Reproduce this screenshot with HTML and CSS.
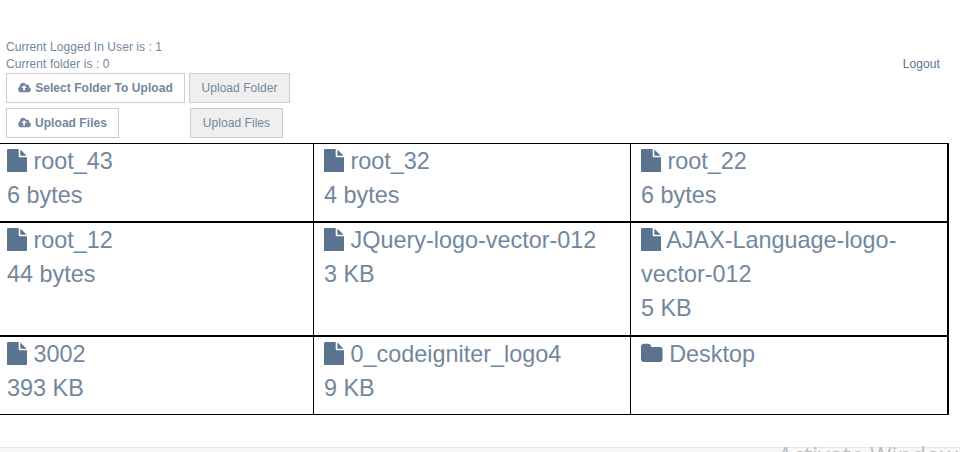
FILE: index.html
```html
<!DOCTYPE html>
<html lang="en">
<head>
<meta charset="utf-8">
<title>Files</title>
<link rel="stylesheet" href="styles.css">
</head>
<body>
<svg class="defs" aria-hidden="true">
<symbol id="file" viewBox="0 0 1536 1792"><path d="M1024 512v-472q22 14 36 28l408 408q14 14 28 36h-472zM896 544q0 40 28 68t68 28h544v1056q0 40-28 68t-68 28h-1344q-40 0-68-28t-28-68v-1600q0-40 28-68t68-28h800v544z"/></symbol>
<symbol id="folder" viewBox="0 0 1664 1792"><path d="M1664 608v704q0 92-66 158t-158 66h-1216q-92 0-158-66t-66-158v-960q0-92 66-158t158-66h320q92 0 158 66t66 158v32h672q92 0 158 66t66 158z"/></symbol>
<symbol id="cloud" viewBox="0 0 1920 1792"><path d="M1280 864q0-14-9-23l-352-352q-9-9-23-9t-23 9l-351 351q-10 12-10 24 0 14 9 23t23 9h224v352q0 13 9.5 22.5t22.5 9.5h192q13 0 22.5-9.5t9.5-22.5v-352h224q13 0 22.5-9.5t9.5-22.5zM1920 1152q0 159-112.5 271.5t-271.5 112.5h-1088q-185 0-316.5-131.5t-131.5-316.5q0-130 70-240t188-165q-2-30-2-43 0-212 150-362t362-150q156 0 285.5 87t188.5 231q71-62 166-62 106 0 181 75t75 181q0 76-41 138 130 31 213.5 135.5t83.5 238.5z"/></symbol>
</svg>
<header class="top">
  <div class="status">
    <div>Current Logged In User is : 1</div>
    <div>Current folder is : 0</div>
  </div>
  <a class="logout">Logout</a>
</header>
<div class="actions">
  <div class="slot"><label class="btn pick pick-folder"><svg class="cloud"><use href="#cloud"/></svg>Select Folder To Upload</label></div>
  <button class="btn send send-folder">Upload Folder</button>
</div>
<div class="actions">
  <div class="slot"><label class="btn pick pick-files"><svg class="cloud"><use href="#cloud"/></svg>Upload Files</label></div>
  <button class="btn send send-files">Upload Files</button>
</div>
<main class="grid">
  <div class="cell"><svg class="file"><use href="#file"/></svg> root_43<br>6 bytes</div>
  <div class="cell"><svg class="file"><use href="#file"/></svg> root_32<br>4 bytes</div>
  <div class="cell"><svg class="file"><use href="#file"/></svg> root_22<br>6 bytes</div>
  <div class="cell"><svg class="file"><use href="#file"/></svg> root_12<br>44 bytes</div>
  <div class="cell"><svg class="file"><use href="#file"/></svg> JQuery-logo-vector-012<br>3 KB</div>
  <div class="cell"><svg class="file"><use href="#file"/></svg> AJAX-Language-logo-<br>vector-012<br>5 KB</div>
  <div class="cell"><svg class="file"><use href="#file"/></svg> 3002<br>393 KB</div>
  <div class="cell"><svg class="file"><use href="#file"/></svg> 0_codeigniter_logo4<br>9 KB</div>
  <div class="cell"><svg class="folder"><use href="#folder"/></svg> Desktop</div>
</main>
<footer class="footer"><span class="watermark">Activate Window</span></footer>
</body>
</html>
```
FILE: styles.css
```css
* { box-sizing: border-box; }
body {
  margin: 0;
  height: 452px;
  overflow: hidden;
  display: flex;
  flex-direction: column;
  background: #fff;
  color: #73879c;
  font: 12px/17px "Liberation Sans", Arial, sans-serif;
}
.defs { display: none; }
svg { fill: currentColor; }
.top {
  flex: none;
  display: flex;
  justify-content: space-between;
  align-items: flex-end;
  margin: 39px 20px 0 6px;
  height: 34px;
}
.status { letter-spacing: 0.07px; }
.logout { color: #5a738e; letter-spacing: 0.1px; }
.actions { flex: none; display: flex; height: 35px; padding-left: 6px; }
.slot { width: 183px; }
.btn {
  display: flex;
  align-items: center;
  justify-content: center;
  height: 30px;
  padding: 0;
  border: 1px solid #ccc;
  font: 12px/17px "Liberation Sans", Arial, sans-serif;
  letter-spacing: 0.05px;
  color: #73879c;
  white-space: nowrap;
}
.pick { font-weight: bold; }
.pick-folder { width: 179px; }
.pick-files { width: 113px; }
.send { background: #efefef; }
.send-folder { width: 101px; }
.send-files { width: 93px; margin-left: 1px; }
.cloud { width: 13px; height: 12px; margin-right: 4px; }
.grid {
  flex: none;
  display: grid;
  grid-template-columns: 314px 317px 318px;
  grid-template-rows: 79px 114px 79px;
  width: 949px;
}
.cell {
  padding: 0 0 0 10px;
  border: 1px solid #000;
  border-left: 0;
  font-size: 23.4px;
  line-height: 34px;
}
.cell:nth-child(3n+1) { padding-left: 7px; }
.cell:nth-child(3n) { border-right-width: 2px; }
.file, .folder { height: 23.4px; vertical-align: -3px; color: #5a738e; }
.file { width: 20.06px; }
.folder { width: 21.73px; }
.footer {
  flex: 1;
  min-height: 0;
  margin-top: 32px;
  padding-left: 778px;
  background: #f7f7f7;
  border-top: 1px solid #e7e7e7;
}
.watermark {
  display: block;
  margin-top: -9px;
  font: 23.3px/32px "Open Sans", sans-serif;
  color: #bdbdbd;
  white-space: nowrap;
}
```
